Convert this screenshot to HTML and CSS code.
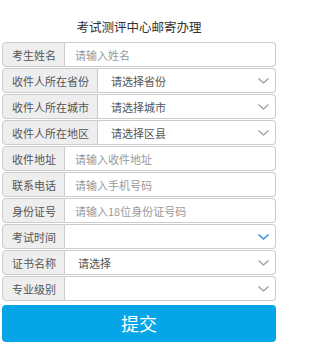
FILE: index.html
```html
<!DOCTYPE html>
<html lang="zh-CN">
<head>
<meta charset="utf-8">
<title>考试测评中心邮寄办理</title>
<link rel="stylesheet" href="styles.css">
</head>
<body>
<div class="page">
  <div class="title">考试测评中心邮寄办理</div>
  <div class="row"><span class="label">考生姓名</span><span class="field ph">请输入姓名</span></div>
  <div class="row"><span class="label">收件人所在省份</span><span class="field sel">请选择省份<svg class="chev" viewBox="0 0 11 6"><path d="M0.5 0.5 L5.5 5 L10.5 0.5"/></svg></span></div>
  <div class="row"><span class="label">收件人所在城市</span><span class="field sel">请选择城市<svg class="chev" viewBox="0 0 11 6"><path d="M0.5 0.5 L5.5 5 L10.5 0.5"/></svg></span></div>
  <div class="row"><span class="label">收件人所在地区</span><span class="field sel">请选择区县<svg class="chev" viewBox="0 0 11 6"><path d="M0.5 0.5 L5.5 5 L10.5 0.5"/></svg></span></div>
  <div class="row"><span class="label">收件地址</span><span class="field ph">请输入收件地址</span></div>
  <div class="row"><span class="label">联系电话</span><span class="field ph">请输入手机号码</span></div>
  <div class="row"><span class="label">身份证号</span><span class="field ph">请输入18位身份证号码</span></div>
  <div class="row"><span class="label">考试时间</span><span class="field sel"><svg class="chev blue" viewBox="0 0 11 6"><path d="M0.5 0.5 L5.5 5 L10.5 0.5"/></svg></span></div>
  <div class="row"><span class="label">证书名称</span><span class="field sel">请选择<svg class="chev" viewBox="0 0 11 6"><path d="M0.5 0.5 L5.5 5 L10.5 0.5"/></svg></span></div>
  <div class="row"><span class="label">专业级别</span><span class="field sel"><svg class="chev" viewBox="0 0 11 6"><path d="M0.5 0.5 L5.5 5 L10.5 0.5"/></svg></span></div>
  <div class="submit">提交</div>
</div>
</body>
</html>
```
FILE: styles.css
```css
html, body {
  margin: 0;
  padding: 0;
  background: #fff;
}
body {
  font-family: "Noto Sans CJK SC", "Noto Sans", "Liberation Sans", sans-serif;
  color: #555;
}
.page {
  width: 278px;
  height: 355px;
  box-sizing: border-box;
  padding: 0 2px;
}
.title {
  padding-top: 19px;
  height: 16px;
  line-height: 16px;
  margin-bottom: 7px;
  text-align: center;
  font-size: 12.5px;
  color: #333;
}
.row {
  display: flex;
  height: 25px;
  margin-bottom: 1px;
}
.label {
  display: flex;
  align-items: center;
  box-sizing: border-box;
  height: 25px;
  padding: 0 8px 0 9px;
  background: #eee;
  border: 1px solid #ccc;
  border-radius: 4px 0 0 4px;
  font-size: 11px;
  color: #555;
  white-space: nowrap;
}
.field {
  flex: 1;
  display: flex;
  align-items: center;
  box-sizing: border-box;
  height: 25px;
  border: 1px solid #ccc;
  border-left: none;
  border-radius: 0 4px 4px 0;
  background: #fff;
  font-size: 11px;
  position: relative;
}
.ph {
  padding-left: 10px;
  color: #999;
}
.sel {
  padding-left: 13px;
  color: #555;
}
.chev {
  position: absolute;
  right: 6px;
  top: 9px;
  width: 11px;
  height: 6px;
  fill: none;
  stroke: #999;
  stroke-width: 1.1;
}
.chev.blue {
  stroke: #3d8fe0;
  stroke-width: 1.5;
}
.submit {
  margin-top: 4px;
  height: 37px;
  line-height: 37px;
  background: #06a5e8;
  border-radius: 4px;
  color: #fff;
  font-size: 18px;
  text-align: center;
}
```
